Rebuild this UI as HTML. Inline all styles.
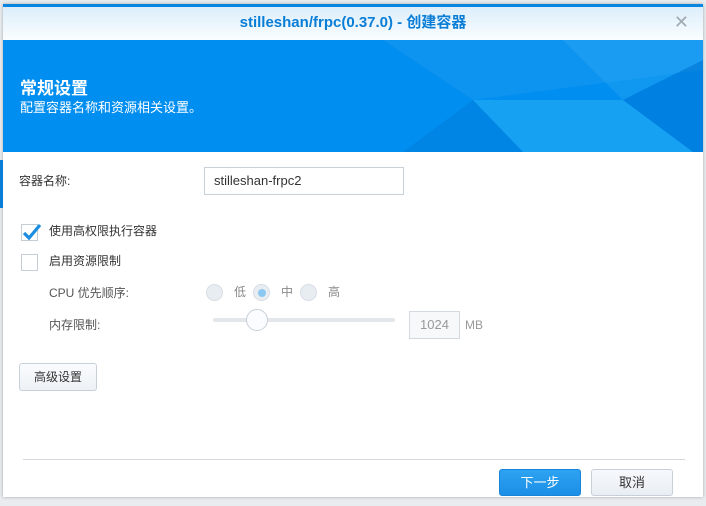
<!DOCTYPE html>
<html><head><meta charset="utf-8"><style>
*{margin:0;padding:0;box-sizing:border-box}
body{width:706px;height:506px;background:#e9ecef;font-family:"Liberation Sans","Noto Sans CJK SC",sans-serif;position:relative;overflow:hidden;font-size:12px;color:#333}
.win{position:absolute;left:3px;top:4px;width:700px;height:493px;background:#fff;box-shadow:0 0 3px rgba(0,0,0,.3);border-top:3px solid #0a86e0}
.title{height:33px;background:linear-gradient(#dceefb,#fafdff);text-align:center;line-height:31px;font-size:15px;color:#0a7ed6;font-weight:bold;position:relative}
.x{position:absolute;right:14px;top:0;font-size:18px;color:#a0a8b0;font-weight:normal}
.banner{height:112px;background:#008ef0;position:relative;overflow:hidden;color:#fff}
.banner h1{position:absolute;left:17px;top:39px;font-size:17px;font-weight:bold;line-height:20px}
.banner p{position:absolute;left:17px;top:60px;font-size:13px;line-height:16px}
.abs{position:absolute;line-height:14px}
.cb{position:absolute;width:17px;height:17px;border:1px solid #c5cdd6;background:#fff}
.radio{position:absolute;width:17px;height:17px;border-radius:50%;background:#e8edf2;border:1px solid #d8dee5}
.btn{position:absolute;border-radius:3px;text-align:center;font-size:13px}
</style></head><body>
<div class="win">
<div class="title">stilleshan/frpc(0.37.0) - 创建容器<span class="x">✕</span></div>
<div class="banner">
<svg width="700" height="112" style="position:absolute;left:0;top:0">
<polygon points="380,0 700,0 700,30 470,60" fill="#fff" opacity=".05"/>
<polygon points="470,60 620,60 690,112 520,112" fill="#40c6f8" opacity=".35"/>
<polygon points="620,60 700,20 700,112 690,112" fill="#0068c4" opacity=".35"/>
<polygon points="400,112 470,60 520,112" fill="#0070cc" opacity=".3"/>
<polygon points="560,0 700,0 700,20 620,60" fill="#40b8f5" opacity=".25"/>
</svg>
<h1>常规设置</h1><p>配置容器名称和资源相关设置。</p>
</div>
<div class="abs" style="left:-3px;top:153px;width:3px;height:48px;background:#0a7ed6"></div>
<div class="abs" style="left:16px;top:167px;font-size:12px">容器名称:</div>
<div class="abs" style="left:201px;top:160px;width:200px;height:28px;border:1px solid #c8d0d8;padding-left:9px;line-height:26px;font-size:13px">stilleshan-frpc2</div>
<div class="cb" style="left:18px;top:217px"></div>
<svg class="abs" style="left:18px;top:213px" width="22" height="22"><path d="M3 13 L8 18 L19 5" stroke="#1a8de0" stroke-width="3.2" fill="none"/></svg>
<div class="abs" style="left:46px;top:217px">使用高权限执行容器</div>
<div class="cb" style="left:18px;top:247px"></div>
<div class="abs" style="left:46px;top:247px">启用资源限制</div>
<div class="abs" style="left:46px;top:279px;color:#555">CPU 优先顺序:</div>
<div class="radio" style="left:203px;top:277px"></div><div class="abs" style="left:231px;top:278px;color:#888">低</div>
<div class="radio" style="left:250px;top:277px"></div><div class="abs" style="left:255px;top:282px;width:8px;height:8px;border-radius:50%;background:#8cc8f0"></div><div class="abs" style="left:278px;top:278px;color:#888">中</div>
<div class="radio" style="left:297px;top:277px"></div><div class="abs" style="left:325px;top:278px;color:#888">高</div>
<div class="abs" style="left:46px;top:311px;color:#555">内存限制:</div>
<div class="abs" style="left:210px;top:311px;width:182px;height:4px;background:#e3e7eb;border-radius:2px"></div>
<div class="abs" style="left:243px;top:302px;width:22px;height:22px;border-radius:50%;background:#fafcff;border:1px solid #c8d0d8"></div>
<div class="abs" style="left:406px;top:304px;width:51px;height:28px;border:1px solid #d3d9df;background:#f6f8fa;text-align:center;line-height:26px;color:#999;font-size:13px">1024</div>
<div class="abs" style="left:462px;top:311px;color:#999">MB</div>
<div class="btn" style="left:16px;top:356px;width:78px;height:28px;border:1px solid #c7d0da;background:linear-gradient(#fafcfe,#edf1f5);line-height:26px;font-size:12px">高级设置</div>
<div class="abs" style="left:20px;top:452px;width:662px;height:1px;background:#d4d8dc"></div>
<div class="btn" style="left:496px;top:462px;width:82px;height:27px;background:linear-gradient(#2ea3f2,#1a8fe6);border:1px solid #1a85d8;color:#fff;line-height:25px">下一步</div>
<div class="btn" style="left:588px;top:462px;width:82px;height:27px;background:linear-gradient(#f6f9fc,#e9eef4);border:1px solid #c7d0da;line-height:25px">取消</div>
</div>
</body></html>
